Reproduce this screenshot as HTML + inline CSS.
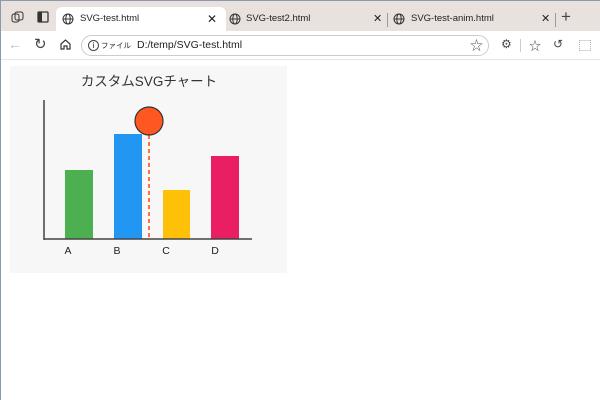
<!DOCTYPE html>
<html><head><meta charset="utf-8"><style>
*{margin:0;padding:0;box-sizing:border-box}
body{width:600px;height:400px;overflow:hidden;background:#fff;font-family:"Liberation Sans","Noto Sans CJK JP",sans-serif;position:relative;border-left:1px solid #8a9aa8;border-top:1px solid #8a9aa8}
.tabs{position:absolute;left:0;top:0;width:600px;height:30px;background:#e8e1de}
.tab{position:absolute;top:6px;height:24px;font-size:9.5px;color:#222;line-height:24px}
.active{left:55px;width:170px;background:#fff;border-radius:6px 6px 0 0}
.addr{position:absolute;left:0;top:30px;width:600px;height:29px;background:#fff;border-bottom:1px solid #e6e6e6}
.bar{position:absolute;left:80px;top:4px;width:408px;height:21px;border:1px solid #ccc;border-radius:11px;font-size:10.5px;line-height:19px;color:#222}
.ic{position:absolute;color:#444;font-size:12px}
</style></head><body>
<div class="tabs">
<svg style="position:absolute;left:10px;top:10px" width="14" height="12"><rect x="1" y="3" width="7" height="8" rx="2" fill="none" stroke="#333"/><rect x="4" y="1" width="8" height="8" rx="2" fill="none" stroke="#333"/></svg>
<svg style="position:absolute;left:36px;top:10px" width="12" height="12"><rect x="1" y="1" width="10" height="10" rx="1" fill="none" stroke="#333" stroke-width="1.3"/><rect x="1" y="1" width="4" height="10" fill="#333"/></svg>
<div class="tab active"><svg style="position:absolute;left:6px;top:6px" width="12" height="12"><circle cx="6" cy="6" r="5" fill="none" stroke="#333"/><ellipse cx="6" cy="6" rx="2.2" ry="5" fill="none" stroke="#333"/><line x1="1" y1="6" x2="11" y2="6" stroke="#333"/></svg><span style="position:absolute;left:24px">SVG-test.html</span><span style="position:absolute;left:151px;font-size:12px">✕</span></div>
<div class="tab" style="left:225px;width:160px"><svg style="position:absolute;left:3px;top:6px" width="12" height="12"><circle cx="6" cy="6" r="5" fill="none" stroke="#333"/><ellipse cx="6" cy="6" rx="2.2" ry="5" fill="none" stroke="#333"/><line x1="1" y1="6" x2="11" y2="6" stroke="#333"/></svg><span style="position:absolute;left:20px">SVG-test2.html</span><span style="position:absolute;left:147px;font-size:11px">✕</span></div>
<div style="position:absolute;left:386px;top:12px;width:1px;height:14px;background:#999"></div>
<div class="tab" style="left:388px;width:160px"><svg style="position:absolute;left:4px;top:6px" width="12" height="12"><circle cx="6" cy="6" r="5" fill="none" stroke="#333"/><ellipse cx="6" cy="6" rx="2.2" ry="5" fill="none" stroke="#333"/><line x1="1" y1="6" x2="11" y2="6" stroke="#333"/></svg><span style="position:absolute;left:22px">SVG-test-anim.html</span><span style="position:absolute;left:152px;font-size:11px">✕</span></div>
<div style="position:absolute;left:554px;top:12px;width:1px;height:14px;background:#999"></div>
<div class="ic" style="left:560px;top:6px;font-size:17px">+</div>
</div>
<div class="addr">
<div class="ic" style="left:7px;top:5px;color:#bbb;font-size:14px">←</div>
<div class="ic" style="left:33px;top:4px;font-size:15px">↻</div>
<svg style="position:absolute;left:58px;top:7px" width="13" height="13"><path d="M2 6 L6.5 2 L11 6 V11 H8 V8 H5 V11 H2 Z" fill="none" stroke="#333" stroke-width="1.2"/></svg>
<div class="bar"><span style="position:absolute;left:6px;top:4px;width:11px;height:11px;border:1px solid #444;border-radius:50%;font-size:8px;line-height:9px;text-align:center">i</span><span style="position:absolute;left:19px;font-size:7.5px">ファイル</span><span style="position:absolute;left:55px">D:/temp/SVG-test.html</span><span style="position:absolute;left:388px;top:0;font-size:13px;color:#555">☆</span></div>
<div class="ic" style="left:500px;top:6px">⚙</div>
<div style="position:absolute;left:519px;top:8px;width:1px;height:13px;background:#ccc"></div>
<div class="ic" style="left:528px;top:6px">☆</div>
<div class="ic" style="left:552px;top:6px">↺</div>
<div class="ic" style="left:578px;top:6px">⬚</div>
</div>
<svg style="position:absolute;left:9px;top:65px" width="277" height="207">
<rect width="277" height="207" fill="#f7f7f7"/>
<text x="139" y="20" font-size="13.5" text-anchor="middle" fill="#333" font-family="Liberation Sans,Noto Sans CJK JP,sans-serif">カスタムSVGチャート</text>
<rect x="55" y="104" width="28" height="69" fill="#4caf50"/>
<rect x="104" y="68" width="28" height="105" fill="#2196f3"/>
<rect x="153" y="124" width="27" height="49" fill="#ffc107"/>
<rect x="201" y="90" width="28" height="83" fill="#e91e63"/>
<line x1="34" y1="34" x2="34" y2="174" stroke="#444" stroke-width="1.5"/>
<line x1="34" y1="173" x2="242" y2="173" stroke="#444" stroke-width="1.5"/>
<line x1="139" y1="69" x2="139" y2="172" stroke="#ff7043" stroke-width="2" stroke-dasharray="4,3"/>
<circle cx="139" cy="55" r="14" fill="#ff5722" stroke="#333" stroke-width="1.2"/>
<g font-size="10.5" fill="#222" text-anchor="middle"><text x="58" y="188">A</text><text x="107" y="188">B</text><text x="156" y="188">C</text><text x="205" y="188">D</text></g>
</svg>
</body></html>
